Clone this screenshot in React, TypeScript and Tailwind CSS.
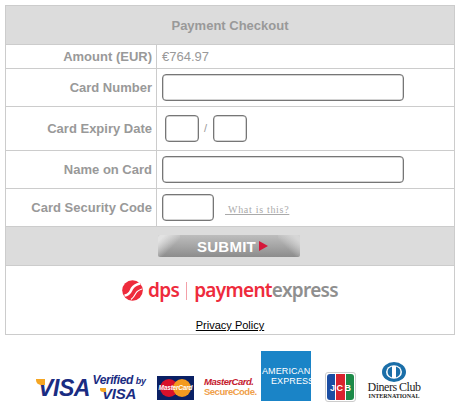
function Label({ children }: { children: React.ReactNode }) {
  return (
    <div className="flex w-[151px] shrink-0 items-center justify-end border-r border-[#ccc] pr-[4px] text-[13px] font-bold text-[#999]">
      {children}
    </div>
  )
}

function Field({ className }: { className: string }) {
  return <div className={`h-[27px] rounded-[4px] border border-[#767676] bg-white shadow-[inset_0_0_0_0.5px_#aaa] ${className}`} />
}

function Row({ label, height, children }: { label: string; height: string; children: React.ReactNode }) {
  return (
    <div className={`flex border-b border-[#ccc] ${height}`}>
      <Label>{label}</Label>
      <div className="flex flex-1 items-center pl-[5px]">{children}</div>
    </div>
  )
}

function DpsMark() {
  return (
    <svg width="21" height="21" viewBox="0 0 21 21" className="shrink-0">
      <circle cx="10.5" cy="10.5" r="10.3" fill="#ee2b3c" />
      <path d="M2.5 15.5 C8 15 8.5 11 10 8.5 C11.5 6 14 4.5 18 3.5" stroke="#fff" strokeWidth="2.6" fill="none" />
      <path d="M9 19.5 C12 17.5 13 15 14 13 C15 11 17 10 20 9" stroke="#fff" strokeWidth="1.1" fill="none" />
    </svg>
  )
}

function DpsLogo() {
  return (
    <div className="flex h-[21px] items-center font-['Noto_Sans',sans-serif] text-[19px] font-semibold leading-none tracking-[-0.7px]">
      <DpsMark />
      <span className="ml-[5px] text-[#ee2b3c]">dps</span>
      <span className="mx-[7px] h-[18px] w-px bg-[#f3a0a8]" />
      <span className="text-[#ee2b3c]">payment</span>
      <span className="text-[#8f8f8f]">express</span>
    </div>
  )
}

function VisaLogo() {
  return (
    <div className="relative h-[19px] w-[53px]">
      <span className="block font-['Liberation_Sans',sans-serif] text-[23px] font-bold italic leading-[20px] tracking-[-0.4px] text-[#1a2c82]">
        VISA
      </span>
      <span className="absolute left-[-2px] top-[1px] h-[6px] w-[9px] rounded-bl-[5px] bg-[#f5a623]" />
    </div>
  )
}

function VerifiedByVisa() {
  return (
    <div className="flex h-[26px] w-[54px] flex-col items-center font-['Liberation_Sans',sans-serif] italic text-[#1a2c82]">
      <span className="whitespace-nowrap text-[12px] font-bold leading-[12px] tracking-[-0.4px]">
        Verified <span className="text-[9px]">by</span>
      </span>
      <span className="relative text-[15px] font-bold leading-[14px] tracking-[-0.2px]">
        VISA
        <span className="absolute left-[-2px] top-[1px] h-[4px] w-[6px] rounded-bl-[3px] bg-[#f5a623]" />
      </span>
    </div>
  )
}

function MasterCardBadge() {
  return (
    <div className="relative flex h-[24px] w-[37px] items-center justify-center bg-[#0a2064]">
      <span className="absolute left-[3px] top-[3px] size-[18px] rounded-full bg-[#d8112a]" />
      <span className="absolute right-[3px] top-[3px] size-[18px] rounded-full bg-[#f39a1f]" />
      <span className="relative whitespace-nowrap font-['Liberation_Sans',sans-serif] text-[6.5px] font-bold italic leading-none tracking-[-0.2px] text-white">
        MasterCard
      </span>
    </div>
  )
}

function SecureCode() {
  return (
    <div className="flex w-[52px] flex-col whitespace-nowrap font-['Liberation_Sans',sans-serif] text-[9.5px] font-bold leading-[10px] tracking-[-0.5px]">
      <span className="italic text-[#c5202e]">MasterCard.</span>
      <span className="text-[#f0a04a]">SecureCode.</span>
    </div>
  )
}

function AmexLogo() {
  return (
    <div className="flex h-[50px] w-[50px] flex-col justify-center whitespace-nowrap bg-[#1a84c7] font-['Liberation_Sans',sans-serif] text-[9px] leading-[10px] text-white">
      <span className="ml-[1px] tracking-[0.1px]">AMERICAN</span>
      <span className="ml-[10px] tracking-[0.1px]">EXPRESS</span>
    </div>
  )
}

function JcbLogo() {
  return (
    <div className="relative flex h-[30px] w-[31px] gap-px rounded-[3px] border border-[#ccc] bg-white p-px">
      <span className="flex-1 rounded-l-[3px] bg-[#1b4ea3]" />
      <span className="flex-1 bg-[#d9232e]" />
      <span className="flex-1 rounded-r-[3px] bg-[#1c8a48]" />
      <span className="absolute left-[4px] top-[11px] font-['Liberation_Sans',sans-serif] text-[9px] font-bold leading-none tracking-[1.5px] text-white">
        JCB
      </span>
    </div>
  )
}

function DinersLogo() {
  return (
    <div className="flex w-[50px] flex-col items-center">
      <svg width="26" height="20" viewBox="0 0 26 24" preserveAspectRatio="none">
        <circle cx="13" cy="12" r="12" fill="#1a6ea8" />
        <circle cx="13" cy="12" r="8" fill="#fff" />
        <path d="M11 5.5 a7 7 0 0 0 0 13 Z M15 5.5 a7 7 0 0 1 0 13 Z" fill="#1a6ea8" />
      </svg>
      <span className="whitespace-nowrap font-['Liberation_Serif',serif] text-[12px] leading-[11px] tracking-[-0.5px] text-[#222]">
        Diners Club
      </span>
      <span className="whitespace-nowrap font-['Liberation_Serif',serif] text-[6px] font-bold leading-[6px] text-[#222]">
        INTERNATIONAL
      </span>
    </div>
  )
}

export default function App() {
  return (
    <div className="h-[410px] w-[459px] overflow-hidden bg-white pl-[5px] pt-[5px] font-['Liberation_Sans',sans-serif]">
      <div className="h-[330px] w-[450px] border border-[#ccc]">
        <div className="flex h-[39px] items-center justify-center border-b border-[#ccc] bg-[#dcdcdc] pt-[2px] text-[13px] font-bold text-[#999]">
          Payment Checkout
        </div>

        <Row label="Amount (EUR)" height="h-[24px]">
          <span className="text-[13px] text-[#999]">€764.97</span>
        </Row>
        <Row label="Card Number" height="h-[38px]">
          <Field className="w-[242px]" />
        </Row>
        <Row label="Card Expiry Date" height="h-[44px]">
          <div className="ml-[3px] flex items-center">
            <Field className="w-[34px]" />
            <span className="mx-[5px] w-[4px] text-[11px] text-[#999]">/</span>
            <Field className="w-[34px]" />
          </div>
        </Row>
        <Row label="Name on Card" height="h-[38px]">
          <Field className="w-[242px]" />
        </Row>
        <Row label="Card Security Code" height="h-[38px]">
          <Field className="w-[52px]" />
          <a className="ml-[11px] mt-[3px] whitespace-pre font-['Liberation_Serif',serif] text-[10px] tracking-[0.7px] text-[#aaa] underline">
            {' What is this?'}
          </a>
        </Row>

        <div className="flex h-[39px] items-center border-b border-[#ccc] bg-[#dcdcdc] pl-[152px]">
          <div className="relative flex h-[22px] w-[142px] items-center overflow-hidden rounded-[2px] bg-[linear-gradient(180deg,#bdbdbd_0%,#a3a3a3_55%,#8c8c8c_100%)] pl-[39px]">
            <span className="absolute inset-y-0 left-0 w-[22px] bg-[linear-gradient(135deg,#e2e2e2_0%,#e2e2e2_15%,rgba(226,226,226,0)_60%)]" />
            <span className="absolute inset-y-0 right-0 w-[22px] bg-[linear-gradient(225deg,#d6d6d6_0%,#d6d6d6_15%,rgba(214,214,214,0)_60%)]" />
            <span className="relative text-[15px] font-bold leading-none tracking-[0.25px] text-white">SUBMIT</span>
            <span className="relative ml-[3px] size-0 border-y-[5px] border-l-[9px] border-y-transparent border-l-[#d5173a]" />
          </div>
        </div>

        <div className="flex h-[68px] flex-col items-center">
          <div className="mt-[14px]">
            <DpsLogo />
          </div>
          <a className="mt-[18px] text-[11px] leading-[12px] text-black underline">Privacy Policy</a>
        </div>
      </div>

      <div className="relative mt-[16px] flex h-[50px] w-[414px] items-end pl-[33px]">
        <div className="mb-[4px] flex items-end">
          <VisaLogo />
        </div>
        <div className="mb-[1px] ml-[1px]">
          <VerifiedByVisa />
        </div>
        <div className="mb-[1px] ml-[11px]">
          <MasterCardBadge />
        </div>
        <div className="mb-[4px] ml-[10px]">
          <SecureCode />
        </div>
        <div className="ml-[5px] self-start">
          <AmexLogo />
        </div>
        <div className="mb-[-1px] ml-[14px]">
          <JcbLogo />
        </div>
        <div className="mb-[2px] ml-[13px]">
          <DinersLogo />
        </div>
      </div>
    </div>
  )
}
